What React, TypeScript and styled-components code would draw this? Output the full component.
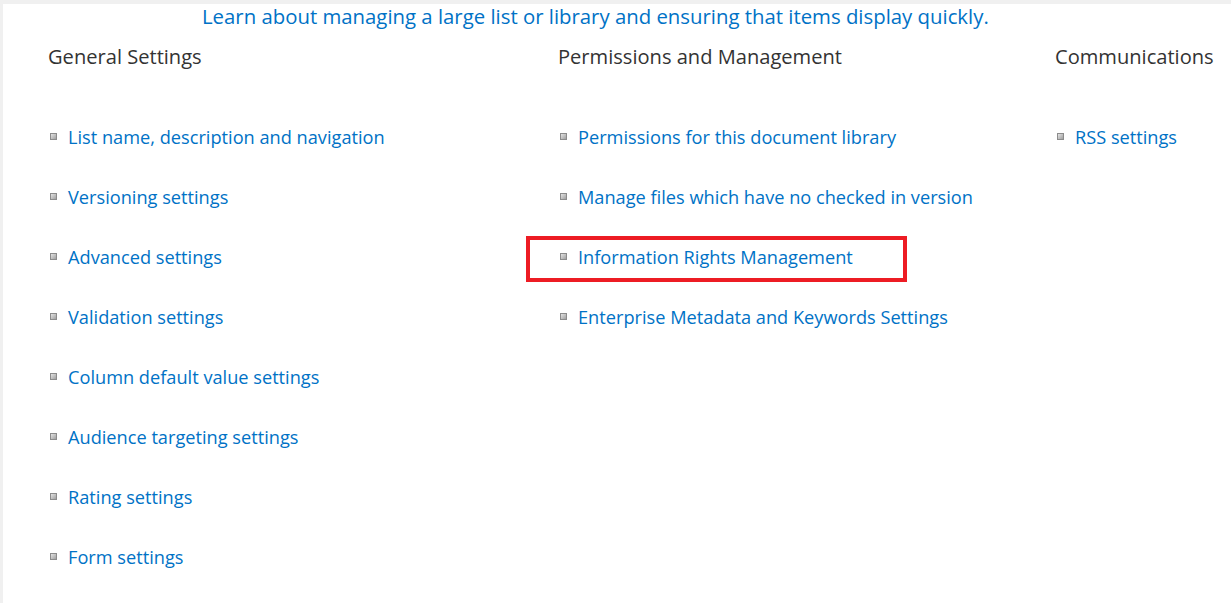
import styled, { createGlobalStyle } from 'styled-components';

const GlobalStyle = createGlobalStyle`
    html, body {
        margin: 0;
        padding: 0;
        background: #f0f0f0;
        font-family: 'Open Sans', 'Noto Sans', sans-serif;
    }
`;

const columns = [
    {
        title: 'General Settings',
        items: [
            'List name, description and navigation',
            'Versioning settings',
            'Advanced settings',
            'Validation settings',
            'Column default value settings',
            'Audience targeting settings',
            'Rating settings',
            'Form settings',
        ],
    },
    {
        title: 'Permissions and Management',
        items: [
            'Permissions for this document library',
            'Manage files which have no checked in version',
            'Information Rights Management',
            'Enterprise Metadata and Keywords Settings',
        ],
        highlight: 'Information Rights Management',
    },
    {
        title: 'Communications',
        items: ['RSS settings'],
    },
];

export default function App() {
    return (
        <Frame>
            <GlobalStyle />
            <Page>
                <TopLink href="#">Learn about managing a large list or library and ensuring that items display quickly.</TopLink>
                <Columns>
                    {columns.map((col) => (
                        <Column key={col.title}>
                            <Heading>{col.title}</Heading>
                            <List>
                                {col.items.map((item) => (
                                    <Item key={item} $highlight={item === col.highlight}>
                                        <Bullet />
                                        <ItemLink href="#">{item}</ItemLink>
                                    </Item>
                                ))}
                            </List>
                        </Column>
                    ))}
                </Columns>
            </Page>
        </Frame>
    );
}

const Frame = styled.div`
    height: 100vh;
    box-sizing: border-box;
    padding: 4px 0 0 3px;
    overflow: hidden;
`;

const Page = styled.div`
    background: #fff;
    height: 100%;
`;

const TopLink = styled.a`
    display: block;
    padding-left: 199px;
    height: 25px;
    line-height: 25px;
    font-size: 20.35px;
    color: #0072c6;
    text-decoration: none;
    white-space: nowrap;
`;

const Columns = styled.div`
    display: grid;
    grid-template-columns: 510px 497px 1fr;
    padding-left: 45px;
`;

const Column = styled.div`
    display: flex;
    flex-direction: column;
`;

const Heading = styled.h3`
    margin: 13px 0 0 0;
    height: 30px;
    line-height: 30px;
    font-size: 20.1px;
    font-weight: 400;
    color: #333;
    white-space: nowrap;
`;

const List = styled.ul`
    list-style: none;
    margin: 35px 0 0 0;
    padding: 0;
`;

const Item = styled.li<{ $highlight?: boolean }>`
    position: relative;
    display: flex;
    align-items: center;
    gap: 11px;
    height: 60px;
    padding-left: 2px;
    white-space: nowrap;

    ${({ $highlight }) =>
        $highlight &&
        `
        &::after {
            content: '';
            position: absolute;
            left: -32px;
            top: 9px;
            width: 373px;
            height: 38px;
            border: 4px solid #ed1c24;
        }
    `}
`;

const Bullet = styled.span`
    width: 5px;
    height: 5px;
    flex: none;
    border: 1px solid #8c8c8c;
    background: linear-gradient(135deg, #e4e4e4, #a0a0a0);
    margin-top: -1px;
`;

const ItemLink = styled.a`
    font-size: 18.2px;
    color: #0072c6;
    text-decoration: none;
`;
